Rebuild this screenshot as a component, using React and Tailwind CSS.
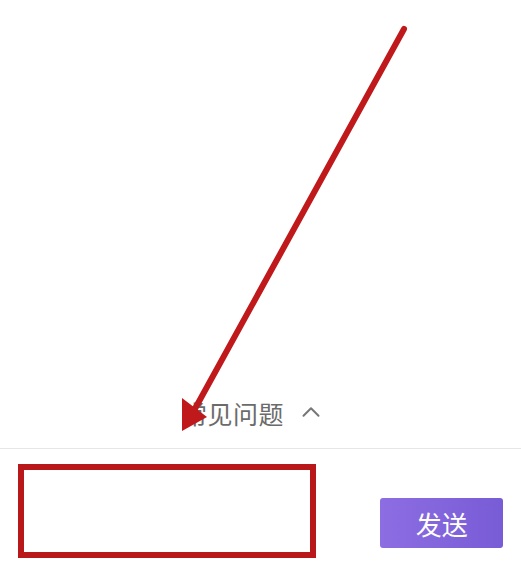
import { ChevronUp } from 'lucide-react'

function ArrowOverlay() {
	return (
		<svg className="pointer-events-none absolute inset-0" width="521" height="568" viewBox="0 0 521 568">
			<line x1="404" y1="29" x2="191" y2="416" stroke="#c0191b" strokeWidth="6" strokeLinecap="round" />
			<polygon points="182,431 182,398 207,417" fill="#c0191b" />
		</svg>
	)
}

export default function App() {
	return (
		<div className="relative flex h-[568px] w-[521px] flex-col overflow-hidden bg-white" style={{ fontFamily: '"Noto Sans CJK SC", "Noto Sans", sans-serif' }}>
			<div className="flex-1" />
			<div className="flex h-[58px] items-center pb-[12px] pl-[182px]">
				<span className="text-[25px] leading-none tracking-[0.5px] text-[#6b6b6b]">常见问题</span>
				<ChevronUp className="ml-[12px] mt-[-2px] h-[30px] w-[30px] text-[#777]" strokeWidth={1.6} />
			</div>
			<div className="h-px w-full bg-[#e6e6e6]" />
			<div className="flex h-[119px] items-start px-[18px] pt-[15px]">
				<div className="h-[94px] w-[299px] border-[6px] border-[#b8181a] bg-white" />
				<button className="ml-[64px] mt-[34px] flex h-[50px] w-[123px] items-center justify-center rounded-[3px] bg-gradient-to-r from-[#8d6de2] to-[#785cd6] text-[26px] text-white">
					发送
				</button>
			</div>
			<ArrowOverlay />
		</div>
	)
}
